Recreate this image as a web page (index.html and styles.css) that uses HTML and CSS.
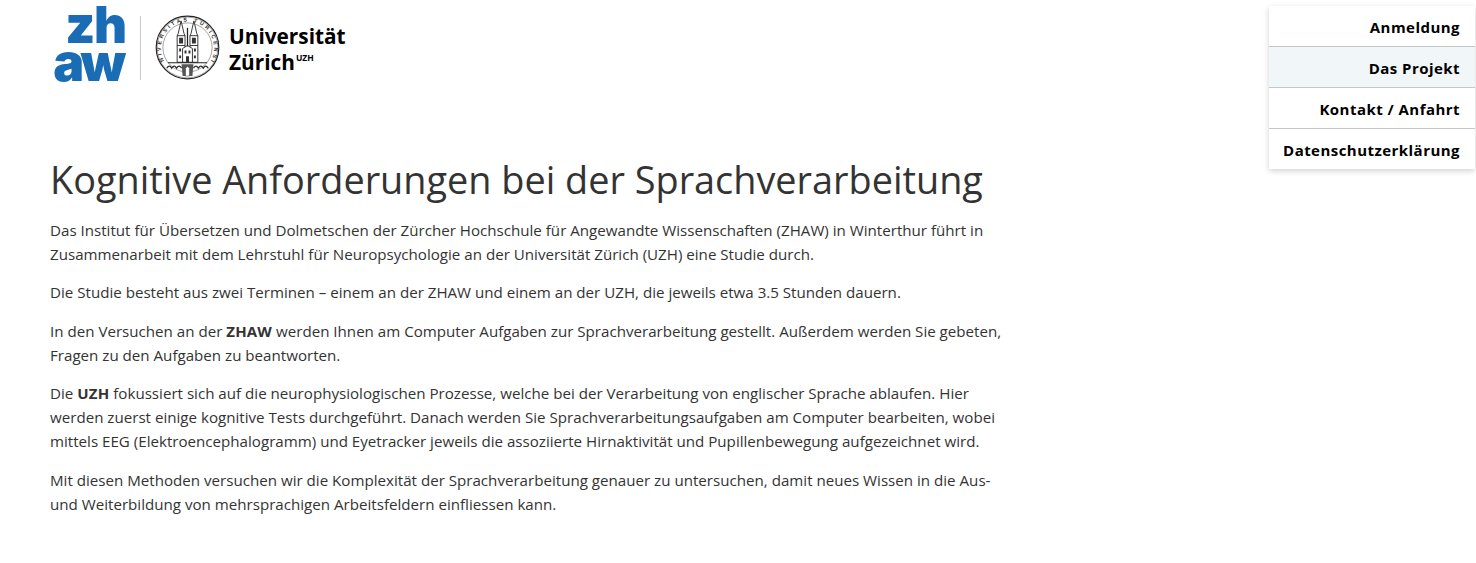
FILE: index.html
```html
<!DOCTYPE html>
<html lang="de">
<head>
<meta charset="utf-8">
<title>Kognitive Anforderungen bei der Sprachverarbeitung</title>
<link rel="stylesheet" href="styles.css">
</head>
<body>
<nav class="menu">
  <a class="menu-item" href="#">Anmeldung</a>
  <a class="menu-item is-active" href="#">Das Projekt</a>
  <a class="menu-item" href="#">Kontakt / Anfahrt</a>
  <a class="menu-item" href="#">Datenschutzerklärung</a>
</nav>
<header class="logos">
  <div class="zhaw"><span class="zh">zh</span><span class="aw">aw</span></div>
  <div class="divider"></div>
  <svg class="seal" viewBox="0 0 66 66" width="65" height="65" aria-hidden="true">
    <defs>
      <path id="ring" d="M10.500 48.500 A27 27 0 1 1 55.500 48.500"/>
    </defs>
    <circle cx="33" cy="33" r="31.800" fill="none" stroke="#222" stroke-width="1.200"/>
    <circle cx="33" cy="33" r="30.800" fill="none" stroke="#555" stroke-width=".5"/>
    <circle cx="33" cy="33" r="25" fill="none" stroke="#666" stroke-width=".6"/>
    <text class="seal-text"><textPath href="#ring" startOffset="50%" text-anchor="middle" textLength="124">UNIVERSITAS TURICENSIS</textPath></text>
    <path d="M22.500 48V21l1-2 3-13 3 13 1 2v27zM35.500 48V21l1-2 3-13 3 13 1 2v27z" fill="#fff" stroke="#222" stroke-width=".9"/>
    <path d="M22.500 21h8M35.500 21h8M22.500 31h8M35.500 31h8" stroke="#222" stroke-width=".9"/>
    <path d="M24.500 23h4v6h-4zM37.500 23h4v6h-4z" fill="#333"/>
    <path d="M28 48V34l5-3 5 3v14z" fill="#fff" stroke="#222" stroke-width=".9"/>
    <path d="M33 32L33 13" stroke="#222" stroke-width="1.300"/>
    <path d="M30 36h2v3h-2zM34 36h2v3h-2zM24.500 34h2v3h-2zM39.500 34h2v3h-2zM24.500 41h2v3h-2zM39.500 41h2v3h-2zM31.500 42h3v6h-3z" fill="#333"/>
    <path d="M13 48.500h40" stroke="#222" stroke-width="1.200"/>
    <path d="M12 54q2.500-4 5 0q2.500-4 5 0q2.500-4 5 0M39 54q2.500-4 5 0q2.500-4 5 0q2.500-4 5 0" fill="none" stroke="#333" stroke-width="1.300"/>
    <path d="M27 50h12l-1 12h-10z" fill="#555"/>
    <path d="M31 62v-8l2-2 2 2v8z" fill="#fff" stroke="#333" stroke-width=".5"/>
  </svg>
  <div class="uzh"><span>Universität</span><span>Zürich<sup>UZH</sup></span></div>
</header>
<main class="content">
  <h1>Kognitive Anforderungen bei der Sprachverarbeitung</h1>
  <p>Das Institut für Übersetzen und Dolmetschen der Zürcher Hochschule für Angewandte Wissenschaften (ZHAW) in Winterthur führt in<br>Zusammenarbeit mit dem Lehrstuhl für Neuropsychologie an der Universität Zürich (UZH) eine Studie durch.</p>
  <p>Die Studie besteht aus zwei Terminen – einem an der ZHAW und einem an der UZH, die jeweils etwa 3.5 Stunden dauern.</p>
  <p>In den Versuchen an der <strong>ZHAW</strong> werden Ihnen am Computer Aufgaben zur Sprachverarbeitung gestellt. Außerdem werden Sie gebeten,<br>Fragen zu den Aufgaben zu beantworten.</p>
  <p>Die <strong>UZH</strong> fokussiert sich auf die neurophysiologischen Prozesse, welche bei der Verarbeitung von englischer Sprache ablaufen. Hier<br>werden zuerst einige kognitive Tests durchgeführt. Danach werden Sie Sprachverarbeitungsaufgaben am Computer bearbeiten, wobei<br>mittels EEG (Elektroencephalogramm) und Eyetracker jeweils die assoziierte Hirnaktivität und Pupillenbewegung aufgezeichnet wird.</p>
  <p>Mit diesen Methoden versuchen wir die Komplexität der Sprachverarbeitung genauer zu untersuchen, damit neues Wissen in die Aus-<br>und Weiterbildung von mehrsprachigen Arbeitsfeldern einfliessen kann.</p>
</main>
</body>
</html>
```
FILE: styles.css
```css
* { box-sizing: border-box; }
body {
  margin: 0;
  height: 563px;
  overflow: hidden;
  background: #fff;
  color: #333;
  font-family: "Open Sans", "Noto Sans", sans-serif;
  font-size: 15.130px;
  line-height: 24px;
}
.menu {
  position: absolute;
  top: 6px;
  right: 1px;
  width: 206px;
  display: flex;
  flex-direction: column;
  background: #fff;
  box-shadow: 0 2px 6px rgba(0, 0, 0, .18);
}
.menu-item {
  height: 41px;
  padding: 9px 15px 0 0;
  text-align: right;
  color: #000;
  font-weight: 700;
  font-size: 15px;
  letter-spacing: .46px;
  text-decoration: none;
  line-height: 24px;
  border-bottom: 1px solid #c4c6c8;
}
.menu-item:last-child { border-bottom: 0; height: 40px; }
.is-active { background: #f1f6f9; }
.logos {
  display: flex;
  align-items: flex-start;
  height: 137px;
  padding: 0 0 0 53px;
}
.zhaw {
  display: flex;
  flex-direction: column;
  align-items: flex-end;
  width: 74px;
  color: #1a6db5;
  font-family: "Inter", "Liberation Sans", sans-serif;
  font-weight: 900;
  padding-top: 5px;
}
.zh {
  font-size: 51px;
  line-height: 40px;
  letter-spacing: -1.500px;
  height: 38px;
  margin-right: 1.500px;
}
.aw {
  font-size: 52px;
  line-height: 40px;
  letter-spacing: -4px;
  margin-right: 5px;
}
.divider {
  width: 1px;
  height: 64px;
  margin: 16px 15px 0 13px;
  background: #c2c8cc;
}
.seal { margin: 15px 0 0 -1px; }
.seal-text {
  font-family: "Liberation Sans", sans-serif;
  font-size: 5.500px;
  font-weight: 700;
  fill: #333;
}
.uzh {
  display: flex;
  flex-direction: column;
  margin: 23px 0 0 9px;
  color: #000;
  font-family: "Open Sans", sans-serif;
  font-weight: 700;
  font-size: 20.800px;
  line-height: 26px;
}
.uzh sup {
  font-size: 8.500px;
  line-height: 0;
  font-weight: 700;
  vertical-align: 9px;
  margin-left: 1px;
}
.content {
  padding-left: 50px;
  width: 1010px;
}
h1 {
  margin: 15px 0 10px;
  font-size: 37.850px;
  font-weight: 400;
  line-height: 56px;
  color: #333;
  white-space: nowrap;
}
p {
  margin: 0 0 14.400px;
  white-space: nowrap;
}
strong {
  font-weight: 700;
  font-size: 15px;
  letter-spacing: .2px;
}
```
